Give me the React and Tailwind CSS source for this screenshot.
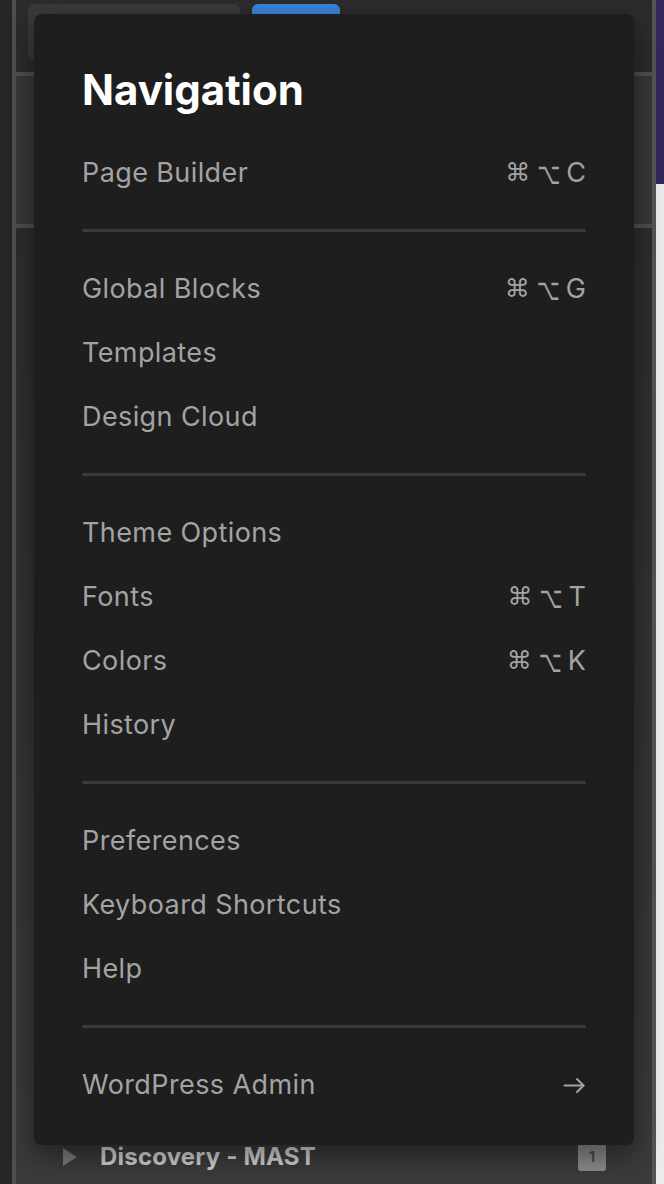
import React from 'react';

const groups = [
  [{ label: 'Page Builder', keys: 'C' }],
  [
    { label: 'Global Blocks', keys: 'G' },
    { label: 'Templates' },
    { label: 'Design Cloud' },
  ],
  [
    { label: 'Theme Options' },
    { label: 'Fonts', keys: 'T' },
    { label: 'Colors', keys: 'K' },
    { label: 'History' },
  ],
  [
    { label: 'Preferences' },
    { label: 'Keyboard Shortcuts' },
    { label: 'Help' },
  ],
];

const Shortcut = ({ letter }) => (
  <span className="flex items-center text-[#a3a3a3] font-['DejaVu_Sans',sans-serif]">
    <span className="text-[25px]">⌘</span>
    <span className="ml-[7px] text-[20px] inline-block scale-y-150">⌥</span>
    <span className="ml-[6px] text-[27px] font-['Inter',sans-serif]">{letter}</span>
  </span>
);

const MenuItem = ({ item }) => (
  <div className="flex items-center justify-between h-16 pt-[2px]">
    <span className="text-[27px] tracking-[0.4px] text-[#a3a3a3]">{item.label}</span>
    {item.keys && <Shortcut letter={item.keys} />}
  </div>
);

const Divider = () => <div className="my-[24.5px] h-[3px] rounded-full bg-[#3a3a3a]" />;

const NavMenu = () => (
  <div className="absolute left-[34px] top-[14px] w-[600px] rounded-lg bg-[#1e1e1e] px-12 pt-[52px] pb-[29px] shadow-[0_10px_30px_rgba(0,0,0,0.45)] z-10">
    <h2 className="text-[42px] leading-[48px] font-bold text-white mb-[26px]">Navigation</h2>
    {groups.map((group, i) => (
      <div key={i}>
        {group.map(item => (
          <MenuItem key={item.label} item={item} />
        ))}
        <Divider />
      </div>
    ))}
    <div className="flex items-center justify-between h-16 pt-[2px]">
      <span className="text-[27px] tracking-[0.4px] text-[#a3a3a3]">WordPress Admin</span>
      <svg width="23" height="17" viewBox="0 0 23 17" fill="none" stroke="#a3a3a3" strokeWidth="2" strokeLinecap="round" strokeLinejoin="round">
        <path d="M1.5 8.5h19" />
        <path d="M14 2l6.5 6.5L14 15" />
      </svg>
    </div>
  </div>
);

export default function App() {
  return (
    <div className="relative flex w-[664px] h-[1184px] overflow-hidden bg-[#262626] font-['Inter',sans-serif]">
      <div className="w-3 bg-[#262626]" />
      <div className="w-1 bg-[#4f4f4f]" />

      <div className="flex-1 flex flex-col">
        <div className="h-[72px] bg-[#2c2c2c] flex gap-3 pl-3 pt-1">
          <div className="w-[212px] h-[56px] rounded-md bg-[#3a3a3a]" />
          <div className="w-[88px] h-[56px] rounded-md bg-[#3a86de]" />
        </div>
        <div className="h-1 bg-[#4f4f4f]" />
        <div className="h-[148px] bg-[#383838]" />
        <div className="h-1 bg-[#4f4f4f]" />
        <div className="flex-1 flex flex-col justify-end bg-gradient-to-b from-[#2d2d2d] to-[#3b3b3b]">
          <div className="flex items-center h-10 mb-[7px] pl-[47px] pr-[46px]">
            <svg width="14" height="18" viewBox="0 0 14 18" className="shrink-0">
              <path d="M0 0L14 9L0 18Z" fill="#7a7a7a" />
            </svg>
            <span className="ml-[23px] text-[24px] font-bold text-[#cfcfcf] tracking-[0.2px]">Discovery - MAST</span>
            <span className="ml-auto flex items-center justify-center w-7 h-7 rounded-[3px] bg-[#8a8a8a] text-[15px] font-bold text-[#4e4e4e]">1</span>
          </div>
        </div>
      </div>

      <div className="w-1 bg-[#555555]" />
      <div className="w-2 flex flex-col">
        <div className="h-[184px] bg-[#35285a]" />
        <div className="flex-1 bg-[#ebebeb]" />
      </div>

      <NavMenu />
    </div>
  );
}
